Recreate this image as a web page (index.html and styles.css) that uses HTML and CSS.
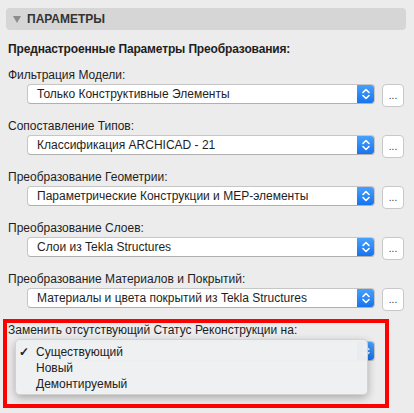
FILE: index.html
```html
<!DOCTYPE html>
<html lang="ru">
<head>
<meta charset="utf-8">
<link rel="stylesheet" href="styles.css">
</head>
<body>
<div class="panel">
  <div class="header"><svg class="tri" width="8" height="7" viewBox="0 0 8 7"><path d="M0 0 H8 L4 7 Z" fill="#8c8c8c"/></svg><span class="title">ПАРАМЕТРЫ</span></div>
  <div class="heading">Преднастроенные Параметры Преобразования:</div>

  <div class="group">
    <div class="label">Фильтрация Модели:</div>
    <div class="row">
      <div class="popup"><span class="ptext">Только Конструктивные Элементы</span><span class="stepper"><svg width="18" height="20" viewBox="0 0 18 20"><path d="M6 8.5 L9 5.5 L12 8.5 M6 11.5 L9 14.5 L12 11.5" fill="none" stroke="#fff" stroke-width="1.6" stroke-linecap="round" stroke-linejoin="round"/></svg></span></div>
      <div class="dots">...</div>
    </div>
  </div>

  <div class="group">
    <div class="label">Сопоставление Типов:</div>
    <div class="row">
      <div class="popup"><span class="ptext">Классификация ARCHICAD - 21</span><span class="stepper"><svg width="18" height="20" viewBox="0 0 18 20"><path d="M6 8.5 L9 5.5 L12 8.5 M6 11.5 L9 14.5 L12 11.5" fill="none" stroke="#fff" stroke-width="1.6" stroke-linecap="round" stroke-linejoin="round"/></svg></span></div>
      <div class="dots">...</div>
    </div>
  </div>

  <div class="group">
    <div class="label">Преобразование Геометрии:</div>
    <div class="row">
      <div class="popup"><span class="ptext">Параметрические Конструкции и MEP-элементы</span><span class="stepper"><svg width="18" height="20" viewBox="0 0 18 20"><path d="M6 8.5 L9 5.5 L12 8.5 M6 11.5 L9 14.5 L12 11.5" fill="none" stroke="#fff" stroke-width="1.6" stroke-linecap="round" stroke-linejoin="round"/></svg></span></div>
      <div class="dots">...</div>
    </div>
  </div>

  <div class="group">
    <div class="label">Преобразование Слоев:</div>
    <div class="row">
      <div class="popup"><span class="ptext">Слои из Tekla Structures</span><span class="stepper"><svg width="18" height="20" viewBox="0 0 18 20"><path d="M6 8.5 L9 5.5 L12 8.5 M6 11.5 L9 14.5 L12 11.5" fill="none" stroke="#fff" stroke-width="1.6" stroke-linecap="round" stroke-linejoin="round"/></svg></span></div>
      <div class="dots">...</div>
    </div>
  </div>

  <div class="group">
    <div class="label">Преобразование Материалов и Покрытий:</div>
    <div class="row">
      <div class="popup"><span class="ptext">Материалы и цвета покрытий из Tekla Structures</span><span class="stepper"><svg width="18" height="20" viewBox="0 0 18 20"><path d="M6 8.5 L9 5.5 L12 8.5 M6 11.5 L9 14.5 L12 11.5" fill="none" stroke="#fff" stroke-width="1.6" stroke-linecap="round" stroke-linejoin="round"/></svg></span></div>
      <div class="dots">...</div>
    </div>
  </div>

  <div class="highlight">
    <div class="label hl-label">Заменить отсутствующий Статус Реконструкции на:</div>
    <div class="row">
      <div class="popup"><span class="ptext"></span><span class="stepper"><svg width="18" height="20" viewBox="0 0 18 20"><path d="M6 8.5 L9 5.5 L12 8.5 M6 11.5 L9 14.5 L12 11.5" fill="none" stroke="#fff" stroke-width="1.6" stroke-linecap="round" stroke-linejoin="round"/></svg></span></div>
    </div>
    <div class="menu">
      <div class="item"><span class="check">✓</span>Существующий</div>
      <div class="item"><span class="check"></span>Новый</div>
      <div class="item"><span class="check"></span>Демонтируемый</div>
    </div>
  </div>
</div>
</body>
</html>
```

FILE: styles.css
```css
html, body {
  margin: 0;
  padding: 0;
  background: #ececec;
}
body {
  font-family: "Liberation Sans", Arial, sans-serif;
  font-size: 12px;
  color: #1e1e1e;
}
.panel {
  padding: 8px 8px 0 6px;
}
.header {
  height: 22px;
  background: #d6d6d6;
  border-radius: 4px;
  display: flex;
  align-items: center;
  padding-left: 7px;
}
.tri {
  display: block;
  flex: none;
}
.title {
  font-weight: bold;
  color: #333;
  margin-left: 6px;
  font-size: 12px;
}
.heading {
  font-weight: bold;
  margin: 11px 0 0 2px;
  line-height: 16px;
  letter-spacing: -0.15px;
}
.group {
  margin-top: 10px;
}
.group + .group {
  margin-top: 11px;
}
.label {
  line-height: 17px;
  margin-left: 2px;
}
.row {
  display: flex;
  align-items: flex-start;
  margin-left: 21px;
}
.popup {
  width: 348px;
  height: 20px;
  box-sizing: border-box;
  background: #fff;
  border: 1px solid #c6c6c6;
  border-bottom-color: #b0b0b0;
  border-radius: 4px;
  display: flex;
  align-items: center;
  position: relative;
  overflow: hidden;
}
.ptext {
  flex: 1;
  padding-left: 9px;
  white-space: nowrap;
  color: #1e1e1e;
}
.stepper {
  width: 18px;
  height: 20px;
  margin: -1px -1px -1px 0;
  background: linear-gradient(#4aa3fd, #1471ee);
  display: flex;
  align-items: center;
  justify-content: center;
}
.stepper svg {
  display: block;
}
.dots {
  width: 22px;
  height: 23px;
  box-sizing: border-box;
  margin-left: 7px;
  background: #fff;
  border: 1px solid #c8c8c8;
  border-radius: 4px;
  display: flex;
  align-items: flex-end;
  justify-content: center;
  padding-bottom: 6px;
  font-size: 10px;
  line-height: 8px;
  color: #333;
}
.highlight {
  position: relative;
  margin: 8px 0 0 -3px;
  width: 386px;
  height: 89px;
  box-sizing: border-box;
  border: 4px solid #fe0000;
}
.hl-label {
  margin-left: 1px;
  line-height: 15px;
}
.highlight .row {
  margin-left: 20px;
  margin-top: 3px;
}
.menu {
  position: absolute;
  left: 8px;
  top: 16px;
  width: 353px;
  height: 56px;
  box-sizing: border-box;
  padding: 4px 0;
  background: rgba(238, 240, 241, 0.97);
  border: 1px solid rgba(0, 0, 0, 0.12);
  border-radius: 5px;
  box-shadow: 0 3px 9px rgba(0, 0, 0, 0.28);
}
.item {
  line-height: 16px;
  display: flex;
  color: #222;
}
.check {
  width: 17px;
  padding-left: 3px;
  font-size: 12px;
  font-weight: bold;
}
```
